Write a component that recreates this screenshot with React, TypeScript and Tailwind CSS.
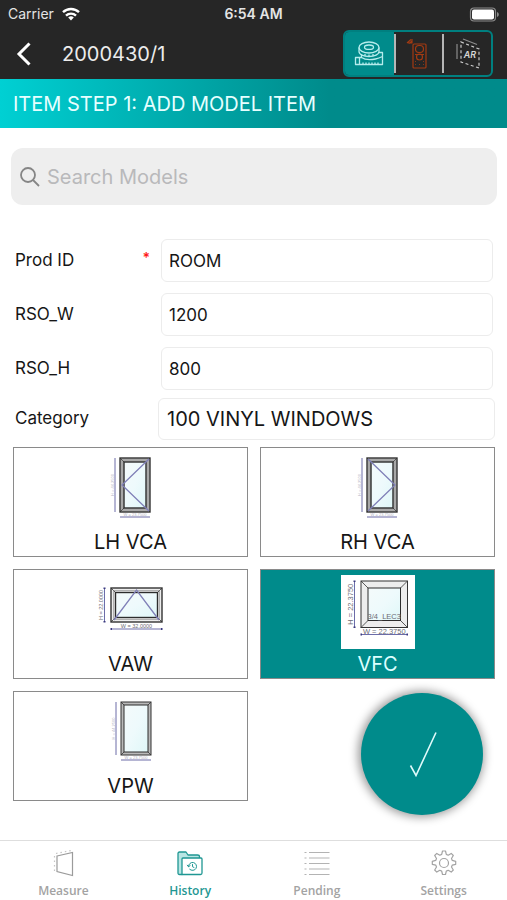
import { useState } from 'react';
import type { ReactNode } from 'react';
import clsx from 'clsx';

type Opening = 'left' | 'right' | 'top' | 'fixed';

interface Model {
  id: string;
  opening: Opening;
  frame: { x: number; y: number; w: number; h: number };
  inset: number;
  widthText: string;
  heightText: string;
  glassText?: string;
  strongText?: boolean;
}

const MODELS: Model[] = [
  {
    id: 'LH VCA',
    opening: 'left',
    frame: { x: 26, y: 5, w: 30, h: 54 },
    inset: 4,
    widthText: 'W = 23.7500',
    heightText: 'H = 44.2500',
  },
  {
    id: 'RH VCA',
    opening: 'right',
    frame: { x: 26, y: 5, w: 30, h: 54 },
    inset: 4,
    widthText: 'W = 23.7500',
    heightText: 'H = 44.2500',
  },
  {
    id: 'VAW',
    opening: 'top',
    frame: { x: 17, y: 13, w: 51, h: 34 },
    inset: 4.5,
    widthText: 'W = 32.0000',
    heightText: 'H = 22.0000',
    strongText: true,
  },
  {
    id: 'VFC',
    opening: 'fixed',
    frame: { x: 20, y: 6, w: 46.5, h: 46.5 },
    inset: 7,
    widthText: 'W = 22.3750',
    heightText: 'H = 22.3750',
    glassText: '3/4_LEC3',
    strongText: true,
  },
  {
    id: 'VPW',
    opening: 'fixed',
    frame: { x: 27, y: 5, w: 30, h: 53 },
    inset: 3,
    widthText: 'W = 23.7500',
    heightText: 'H = 44.2500',
  },
];

function WindowDrawing({ model }: { model: Model }) {
  const { x, y, w, h } = model.frame;
  const i = model.inset;
  const r = x + w;
  const b = y + h;
  const small = model.frame.w < 40;
  const fontSize = small ? 4 : model.id === 'VFC' ? 7.5 : 5.5;
  const textColor = model.strongText ? '#6c6c76' : '#b4b4c4';
  const dimX = x - (small ? 5 : 6.5);
  const dimY = b + (small ? 5 : 7);
  const glassId = `glass-${model.id.replace(' ', '-')}`;
  const heavy = model.opening !== 'fixed';

  return (
    <svg viewBox="0 0 74 74" className="h-[74px] w-[74px] shrink-0 bg-white" aria-hidden="true">
      <defs>
        <linearGradient id={glassId} x1="0" y1="0" x2="1" y2="1">
          <stop offset="0" stopColor="#f4fafb" />
          <stop offset="0.5" stopColor="#eefafc" />
          <stop offset="1" stopColor="#dff7f8" />
        </linearGradient>
      </defs>
      <rect
        x={x}
        y={y}
        width={w}
        height={h}
        fill={small ? '#b9b9b9' : '#ededed'}
        stroke="#333"
        strokeWidth={heavy ? 1.4 : 1}
      />
      <path
        d={`M${x} ${y}l${i} ${i}M${r} ${y}l${-i} ${i}M${x} ${b}l${i} ${-i}M${r} ${b}l${-i} ${-i}`}
        stroke="#333"
        strokeWidth="0.8"
      />
      <rect
        x={x + i}
        y={y + i}
        width={w - 2 * i}
        height={h - 2 * i}
        fill={`url(#${glassId})`}
        stroke="#2d2d2d"
        strokeWidth={heavy ? 1.4 : 1}
      />
      {heavy && (
        <rect
          x={x + i / 2}
          y={y + i / 2}
          width={w - i}
          height={h - i}
          fill="none"
          stroke="#777"
          strokeWidth="0.5"
        />
      )}
      <g fill="none" stroke="#8080b8" strokeWidth="1.3">
        {model.opening === 'left' && <path d={`M${r - 1} ${y + 1}L${x + 2} ${y + h / 2}L${r - 1} ${b - 1}`} />}
        {model.opening === 'right' && <path d={`M${x + 1} ${y + 1}L${r - 2} ${y + h / 2}L${x + 1} ${b - 1}`} />}
        {model.opening === 'top' && <path d={`M${x + 3} ${b - 2}L${x + w / 2} ${y + 2}L${r - 3} ${b - 2}`} />}
      </g>
      <g stroke="#6c6ca8" strokeWidth="1">
        <path d={`M${dimX} ${y}V${b}`} />
        <path d={`M${x} ${dimY}H${r}`} />
      </g>
      {!small && (
        <g fill="#3a3a80">
          <rect x={dimX - 1} y={y - 0.5} width="2" height="1.5" />
          <rect x={dimX - 1} y={b - 1} width="2" height="1.5" />
          <rect x={x - 0.5} y={dimY - 1} width="1.5" height="2" />
          <rect x={r - 1} y={dimY - 1} width="1.5" height="2" />
        </g>
      )}
      <g fontFamily="Liberation Sans, sans-serif" fontSize={fontSize} fill={textColor} textAnchor="middle">
        <text x={x + w / 2} y={dimY - 1}>
          {model.widthText}
        </text>
        <text transform={`translate(${dimX - 1.5} ${y + h / 2}) rotate(-90)`}>{model.heightText}</text>
        {model.glassText && (
          <text x={x + w / 2} y={b - i - 1.5}>
            {model.glassText}
          </text>
        )}
      </g>
    </svg>
  );
}

function TapeIcon() {
  return (
    <svg
      width="30"
      height="26"
      viewBox="0 0 30 26"
      fill="none"
      stroke="#b5ecec"
      strokeWidth="1.3"
      strokeLinejoin="round"
      aria-hidden="true"
    >
      <ellipse cx="15" cy="6.5" rx="10" ry="5.5" />
      <ellipse cx="15" cy="6.2" rx="4.5" ry="2.2" />
      <path d="M5 6.5v4c0 3 4.500 5 10 5s10-2 10-5v-4" />
      <path d="M7.500 13.500v3.500M25 11.500h3.500v12H1.500v-7H7.500c3 2 9 2.500 14 1.500 3-.6 5-1.500 7-2.500" />
      <path d="M5.500 16.500v7M9 21.500v2M12 21.500v2M15 21.500v2M18 21.500v2M21 21.500v2M24 21.500v2M11 13v2M15 13.500v2M19 13v2" />
    </svg>
  );
}

function LaserIcon() {
  return (
    <svg
      width="26"
      height="32"
      viewBox="0 0 26 32"
      fill="none"
      stroke="#a23a12"
      strokeWidth="1.2"
      strokeLinejoin="round"
      aria-hidden="true"
    >
      <path d="M1 5l4-3.500M2 5h4V1M3 5.500L6 3" />
      <rect x="7" y="6" width="13" height="24" rx="1" />
      <rect x="9.500" y="7.500" width="8" height="7" rx="3.500" />
      <circle cx="13.500" cy="19" r="3" />
      <path d="M9 16.500h9M9 26.500h.8M13 26.500h.8M17 26.500h.8M9 23.500h.8M17 23.500h.8" />
    </svg>
  );
}

function ArIcon() {
  return (
    <svg width="26" height="34" viewBox="0 0 26 34" fill="none" stroke="#c9c9c9" strokeWidth="1.2" aria-hidden="true">
      <path d="M2 7v15M8 2l14 5.500" stroke="#8c8c8c" />
      <path d="M6 5l18 7v19L6 25z" strokeDasharray="3 2.500" />
      <text
        x="15"
        y="21"
        fontSize="9"
        fontWeight="600"
        fontStyle="italic"
        fontFamily="Inter, sans-serif"
        fill="#d6d6d6"
        stroke="none"
        textAnchor="middle"
      >
        AR
      </text>
    </svg>
  );
}

function MeasureIcon() {
  return (
    <svg width="26" height="28" viewBox="0 0 26 28" fill="none" stroke="#9b9b9b" strokeWidth="1.2" aria-hidden="true">
      <path d="M7 7l15.500-3.500v23L7 22.500z" />
      <path d="M4.500 7v15.500M6 4.500L21 1.500" stroke="#c4c4c4" strokeDasharray="1.500 3" />
    </svg>
  );
}

function HistoryIcon() {
  return (
    <svg
      width="26"
      height="28"
      viewBox="0 0 26 28"
      fill="none"
      stroke="#1f9793"
      strokeWidth="1.3"
      strokeLinejoin="round"
      strokeLinecap="round"
      aria-hidden="true"
    >
      <path d="M5 25.500H2.500c-1 0-1.500-.6-1.500-1.500V4.500C1 3.500 1.500 3 2.500 3H9l2 3h9.500c1 0 2 .6 2 1.800V9" fill="#b9e6e4" />
      <path d="M5 25.500V10c0-.7.4-1 1-1h18c.7 0 1 .4 1 1v14c0 1-.6 1.500-1.500 1.500z" fill="#fff" />
      <path d="M11.500 17.500a4 4 0 1 1 1.200 2.800M10.300 16.200l1.200 1.600 1.600-1.200M15.500 15.500v2.200l1.500.8" strokeWidth="1" />
    </svg>
  );
}

function PendingIcon() {
  return (
    <svg width="26" height="28" viewBox="0 0 26 28" fill="none" stroke="#b3b3b3" strokeWidth="1.1" aria-hidden="true">
      <path d="M5 3.500h20.500M5 9h20.500M5 14.500h20.500M5 20h20.500M5 25.500h20.500" />
      <path d="M.5 3.500h2M.5 9h2M.5 14.500h2M.5 20h2M.5 25.500h2" />
    </svg>
  );
}

function SettingsIcon() {
  return (
    <svg
      width="26"
      height="28"
      viewBox="0 0 26 28"
      fill="none"
      stroke="#a3a3a3"
      strokeWidth="1.2"
      strokeLinejoin="round"
      aria-hidden="true"
    >
      <circle cx="13" cy="14" r="4.500" />
      <path d="M11.500 2h3l.8 3.400 1.900.8 3-1.800 2.100 2.100-1.800 3 .8 1.900 3.400.9v3l-3.400.8-.8 1.900 1.800 3-2.100 2.100-3-1.800-1.900.8-.8 3.400h-3l-.8-3.400-1.900-.8-3 1.800-2.100-2.100 1.800-3-.8-1.900-3.400-.8v-3l3.400-.9.8-1.900-1.800-3 2.100-2.100 3 1.800 1.900-.8z" />
    </svg>
  );
}

const TOOLS: { id: string; label: string; icon: ReactNode }[] = [
  { id: 'tape', label: 'Tape measure', icon: <TapeIcon /> },
  { id: 'laser', label: 'Laser measure', icon: <LaserIcon /> },
  { id: 'ar', label: 'AR measure', icon: <ArIcon /> },
];

const TABS: { label: string; icon: ReactNode }[] = [
  { label: 'Measure', icon: <MeasureIcon /> },
  { label: 'History', icon: <HistoryIcon /> },
  { label: 'Pending', icon: <PendingIcon /> },
  { label: 'Settings', icon: <SettingsIcon /> },
];

function StatusBar() {
  return (
    <div className="grid h-7 grid-cols-3 items-center px-2 text-sm text-[#e4e4e4]">
      <div className="flex items-center gap-2">
        <span>Carrier</span>
        <svg width="18" height="14" viewBox="0 0 18 14" fill="none" stroke="#fff" strokeWidth="2.400" aria-hidden="true">
          <path d="M1 5.200a11.500 11.500 0 0 1 16 0M4 8.600a7.200 7.200 0 0 1 10 0" />
          <path d="M9 13.500l-2.800-2.900a4 4 0 0 1 5.600 0z" fill="#fff" stroke="none" />
        </svg>
      </div>
      <span className="text-center font-semibold">6:54 AM</span>
      <svg width="31" height="15" viewBox="0 0 31 15" className="justify-self-end" aria-hidden="true">
        <rect x="2.500" y="1" width="25" height="13" rx="3.500" fill="none" stroke="#8b8b8b" strokeWidth="1.200" />
        <rect x="4" y="2.500" width="22" height="10" rx="2" fill="#fff" />
        <path d="M29 5c1.300.5 1.800 1.500 1.800 2.500s-.5 2-1.800 2.500z" fill="#8b8b8b" />
      </svg>
    </div>
  );
}

function Field({ id, label, value, required }: { id: string; label: string; value: string; required?: boolean }) {
  return (
    <div className="flex items-center pr-[2px]">
      <label htmlFor={id} className="flex w-[148px] shrink-0 justify-between pr-[11px] pl-[2px] text-[17px]">
        {label}
        {required && <span className="text-sm font-semibold text-[#ff1a1a]">*</span>}
      </label>
      <input
        id={id}
        type="text"
        defaultValue={value}
        required={required}
        className="h-[43px] min-w-0 flex-1 rounded-md border border-[#ececec] bg-white px-[7px] text-[17px] outline-none"
      />
    </div>
  );
}

export default function App() {
  const [tool, setTool] = useState('tape');
  const [selected, setSelected] = useState('VFC');

  return (
    <div className="relative flex min-h-screen flex-col bg-white font-['Inter','Liberation_Sans',sans-serif] text-[#161616]">
      <header className="bg-[#262626]">
        <StatusBar />
        <div className="flex h-[51px] items-center pr-[14px] pl-4">
          <button type="button" aria-label="Back" className="w-[46px]">
            <svg width="16" height="26" viewBox="0 0 16 26" fill="none" stroke="#fff" strokeWidth="3" aria-hidden="true">
              <path d="M13.500 2.500L3 13l10.500 10.500" />
            </svg>
          </button>
          <h1 className="flex-1 text-xl text-[#ececec]">2000430/1</h1>
          <div className="flex h-[47px] w-[150px] items-center overflow-hidden rounded-md border-2 border-[#008080]">
            {TOOLS.map((item, index) => (
              <div key={item.id} className="flex h-full flex-1 items-center">
                {index > 0 && <span className="h-[39px] w-[2px] bg-[#b5b5b5]" />}
                <button
                  type="button"
                  aria-label={item.label}
                  aria-pressed={tool === item.id}
                  onClick={() => setTool(item.id)}
                  className={clsx('flex h-full flex-1 items-center justify-center', tool === item.id && 'bg-[#008b8b]')}
                >
                  {item.icon}
                </button>
              </div>
            ))}
          </div>
        </div>
      </header>

      <h2 className="flex h-[49px] items-center bg-linear-to-r from-[#00d0d3] to-[#008b8b] to-65% pl-[13px] text-xl text-[#e6ffff]">
        ITEM STEP 1: ADD MODEL ITEM
      </h2>

      <main className="flex-1 pt-5 pr-3 pb-9 pl-[13px]">
        <label className="-mx-[2px] flex h-[57px] items-center gap-[6px] rounded-xl bg-[#eeeeee] px-2">
          <svg width="22" height="22" viewBox="0 0 22 22" fill="none" stroke="#858585" strokeWidth="1.800" aria-hidden="true">
            <circle cx="9" cy="9" r="7" />
            <path d="M14 14l6 6" />
          </svg>
          <input
            type="search"
            aria-label="Search Models"
            placeholder="Search Models"
            className="min-w-0 flex-1 bg-transparent text-xl outline-none placeholder:text-[#b9b9bb]"
          />
        </label>

        <form className="mt-[34px]" onSubmit={(e) => e.preventDefault()}>
          <div className="flex flex-col gap-[11px]">
            <Field id="prod-id" label="Prod ID" value="ROOM" required />
            <Field id="rso-w" label="RSO_W" value="1200" />
            <Field id="rso-h" label="RSO_H" value="800" />
          </div>
          <div className="mt-2 flex items-center">
            <label htmlFor="category" className="w-[145px] shrink-0 pl-[2px] text-[17px]">
              Category
            </label>
            <select
              id="category"
              className="h-[42px] min-w-0 flex-1 appearance-none rounded-md border border-[#ececec] bg-white px-2 text-xl outline-none"
            >
              <option>100 VINYL WINDOWS</option>
            </select>
          </div>
        </form>

        <div className="mt-[7px] grid grid-cols-2 gap-3">
          {MODELS.map((model) => (
            <button
              key={model.id}
              type="button"
              aria-pressed={selected === model.id}
              onClick={() => setSelected(model.id)}
              className={clsx(
                'flex h-[110px] flex-col items-center border border-[#8a8a8a] pt-[5px] text-xl leading-[30px]',
                selected === model.id ? 'bg-[#008b8b] text-[#dcffff]' : 'bg-white'
              )}
            >
              <WindowDrawing model={model} />
              {model.id}
            </button>
          ))}
        </div>
      </main>

      <button
        type="button"
        aria-label="Confirm"
        className="absolute right-6 bottom-[85px] flex h-[122px] w-[122px] items-center justify-center rounded-full bg-[#008b8b] shadow-[-1px_0_10px_2px_rgba(0,0,0,0.4)]"
      >
        <svg width="30" height="46" viewBox="0 0 30 46" fill="none" stroke="#dffafa" strokeWidth="1.600" aria-hidden="true">
          <path d="M3.500 34.500L9 44.500L29 1.500" />
        </svg>
      </button>

      <nav className="grid h-[60px] grid-cols-4 border-t border-[#dedede] font-['Open_Sans',sans-serif] text-xs font-semibold">
        {TABS.map((tab) => {
          const active = tab.label === 'History';
          return (
            <a
              key={tab.label}
              href="#"
              aria-current={active ? 'page' : undefined}
              className={clsx('flex flex-col items-center gap-[6px] pt-2', active ? 'text-[#1f9793]' : 'text-[#a3a3a3]')}
            >
              {tab.icon}
              {tab.label}
            </a>
          );
        })}
      </nav>
    </div>
  );
}
